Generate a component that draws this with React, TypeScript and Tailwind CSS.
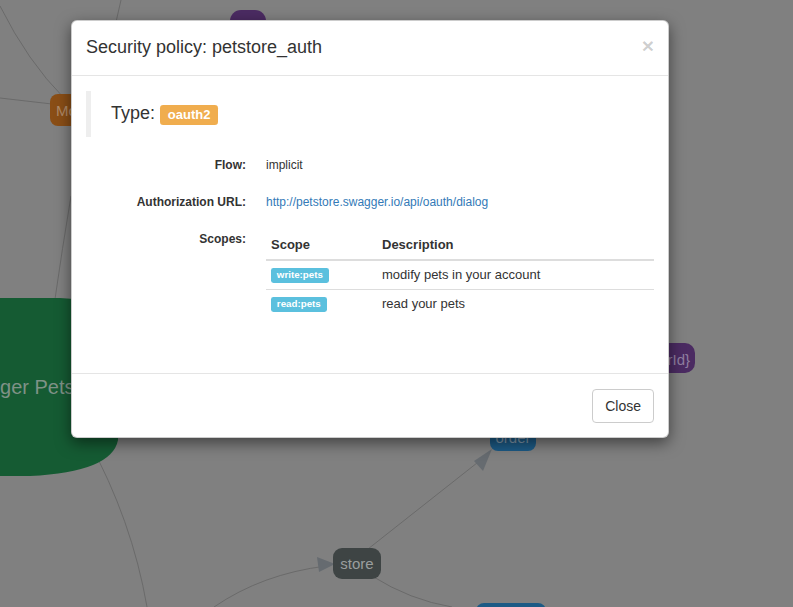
const font = "font-['Liberation_Sans',Arial,sans-serif]";

// Graph seen behind the modal backdrop (colours already dimmed by the overlay)
function GraphBackdrop() {
  const line = "#6a6a6a";
  return (
    <svg className="absolute inset-0" width={793} height={607} viewBox="0 0 793 607">
      <g fill="none" stroke={line} strokeWidth={1}>
        <path d="M0 6 Q 28 62 64 98" />
        <path d="M121 0 L116 22" />
        <path d="M0 98 L52 104" />
        <path d="M71 196 Q 62 250 55 299" />
        <path d="M88 440 Q 132 520 147 607" />
        <path d="M368 549 L 482 459" />
        <path d="M214 607 Q 262 574 326 566" />
        <path d="M372 576 Q 410 600 452 607" />
      </g>
      <g fill="#666b70">
        <path d="M492 449 L 474 461 L 483 471 Z" />
        <path d="M335 564 L 317 557 L 319 572 Z" />
      </g>

      <rect x={230} y={10} width={36} height={34} rx={11} fill="#4b2b62" />
      <rect x={50} y={94} width={42} height={32} rx={8} fill="#8a4e16" />
      <text x={56} y={116} fontSize={15} fill="#b08a68" fontFamily="Liberation Sans, Arial">Mo</text>

      <path
        d="M-120 298 L 60 298 Q 118 300 118 340 L 118 440 Q 112 472 30 476 L -120 476 Z"
        fill="#155b33"
      />
      <text x={-50} y={394} fontSize={20} fill="#7f9287" fontFamily="Liberation Sans, Arial">Swagger Petstore</text>

      <rect x={640} y={343} width={55} height={30} rx={10} fill="#4b2b62" />
      <text x={690} y={365} fontSize={15} textAnchor="end" fill="#8f7fa0" fontFamily="Liberation Sans, Arial">{"{orderId}"}</text>

      <rect x={490} y={420} width={46} height={31} rx={8} fill="#1c5a85" />
      <text x={513} y={443} fontSize={15} textAnchor="middle" fill="#7d95a8" fontFamily="Liberation Sans, Arial">order</text>

      <rect x={333} y={548} width={48} height={31} rx={9} fill="#3e4444" />
      <text x={357} y={569} fontSize={15} textAnchor="middle" fill="#9a9e9e" fontFamily="Liberation Sans Narrow, Liberation Sans, Arial">store</text>

      <rect x={476} y={603} width={70} height={24} rx={8} fill="#1c5a85" />
    </svg>
  );
}

function Label({ children, tone }: { children: string; tone: "warning" | "info" }) {
  return (
    <span
      className={`inline-block rounded-[0.25em] px-[0.6em] pt-[0.2em] pb-[0.3em] font-bold leading-none text-white ${
        tone === "warning" ? "bg-[#f0ad4e]" : "bg-[#5bc0de]"
      }`}
    >
      {children}
    </span>
  );
}

const scopes = [
  { name: "write:pets", desc: "modify pets in your account" },
  { name: "read:pets", desc: "read your pets" },
];

export default function App() {
  return (
    <div className={`relative h-[607px] w-[793px] overflow-hidden bg-[#808080] ${font} text-[#333]`}>
      <GraphBackdrop />

      <div className="absolute inset-0 pl-[71px] pt-[20px]">
        <div className="w-[598px] rounded-md border border-black/20 bg-white shadow-[0_5px_15px_rgba(0,0,0,0.5)]">
          <div className="flex items-start justify-between border-b border-[#e5e5e5] px-[14px] pt-[14px] pb-[15px]">
            <h4 className="text-[18px] leading-[25px]">Security policy: petstore_auth</h4>
            <button className="text-[21px] font-bold leading-none text-black/20">×</button>
          </div>

          <div className="px-[14px] pt-[15px] pb-[15px]">
            <div className="mb-5 border-l-[5px] border-[#eee] px-5 py-[10px] text-[18px] leading-6">
              Type: <span className="text-[13px]"><Label tone="warning">oauth2</Label></span>
            </div>

            <dl className="text-[12px] leading-[17px]">
              <div className="mb-5 flex">
                <dt className="w-[160px] shrink-0 text-right font-bold">Flow:</dt>
                <dd className="ml-5">implicit</dd>
              </div>
              <div className="mb-5 flex">
                <dt className="w-[160px] shrink-0 text-right font-bold">Authorization URL:</dt>
                <dd className="ml-5 text-[#337ab7]">http://petstore.swagger.io/api/oauth/dialog</dd>
              </div>
              <div className="mb-5 flex">
                <dt className="w-[160px] shrink-0 text-right font-bold">Scopes:</dt>
                <dd className="ml-5 flex-1">
                  <table className="mb-5 w-full text-[13px] leading-[18px]">
                    <thead>
                      <tr className="border-b-2 border-[#ddd]">
                        <th className="w-[111px] p-[5px] text-left font-bold">Scope</th>
                        <th className="p-[5px] text-left font-bold">Description</th>
                      </tr>
                    </thead>
                    <tbody>
                      {scopes.map((s, i) => (
                        <tr key={s.name} className={i === 0 ? "border-b border-[#ddd]" : ""}>
                          <td className="p-[5px] text-[9.75px]">
                            <Label tone="info">{s.name}</Label>
                          </td>
                          <td className="p-[5px]">{s.desc}</td>
                        </tr>
                      ))}
                    </tbody>
                  </table>
                </dd>
              </div>
            </dl>
          </div>

          <div className="flex justify-end border-t border-[#e5e5e5] px-[14px] pt-[15px] pb-[14px]">
            <button className="h-[34px] rounded border border-[#ccc] bg-white px-3 text-[14px] leading-5 text-[#333]">
              Close
            </button>
          </div>
        </div>
      </div>
    </div>
  );
}
